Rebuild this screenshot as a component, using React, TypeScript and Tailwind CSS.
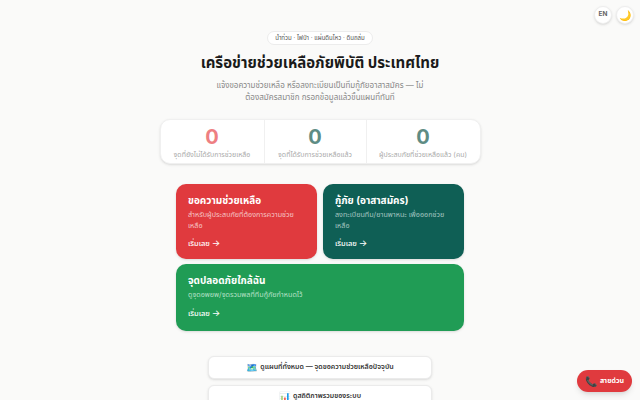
const font = { fontFamily: '"Inter", "Noto Sans Thai", "Noto Sans", "Liberation Sans", sans-serif' };

const stats = [
  { value: "0", label: "จุดที่ยังไม่ได้รับการช่วยเหลือ", color: "text-[#ee7f82]", width: "w-[104px]" },
  { value: "0", label: "จุดที่ได้รับการช่วยเหลือแล้ว", color: "text-[#5e8c84]", width: "w-[102px]" },
  { value: "0", label: "ผู้ประสบภัยที่ช่วยเหลือแล้ว (คน)", color: "text-[#5e8c84]", width: "flex-1" },
];

const Card = ({ title, desc, bg, sub, className }: { title: string; desc: string; bg: string; sub: string; className: string }) => (
  <div className={`${bg} ${className} rounded-[10px] px-3 pt-[6px] text-white shadow-sm`}>
    <h2 className="text-[10px] font-bold leading-[20px]">{title}</h2>
    <p className={`${sub} text-[7.2px] leading-[10.5px]`}>{desc}</p>
    <p className="mt-[7px] text-[7.5px] font-medium leading-[12px]">เริ่มเลย <span className="text-[9px] leading-none">→</span></p>
  </div>
);

const LinkButton = ({ icon, text }: { icon: string; text: string }) => (
  <button className="flex h-[23px] items-center justify-center gap-[2px] rounded-[6px] border border-[#ebebeb] bg-white text-[7px] font-semibold text-[#333333] shadow-sm">
    <span className="text-[9.5px] leading-none">{icon}</span>
    {text}
  </button>
);

export default function App() {
  return (
    <div style={font} className="relative h-[400px] w-[640px] overflow-hidden bg-[#fafaf9] text-[#1c1c1c]">
      <div className="absolute right-[6px] top-[6px] flex gap-1">
        <button className="flex h-[18px] w-[18px] items-center justify-center rounded-full border border-[#eeeeee] bg-white text-[6.5px] font-bold text-[#666666] shadow-sm">EN</button>
        <button className="flex h-[18px] w-[18px] items-center justify-center rounded-full border border-[#eeeeee] bg-white text-[10px] shadow-sm">🌙</button>
      </div>

      <div className="flex flex-col items-center pt-[31px]">
        <div className="rounded-full border border-[#ececec] bg-white px-[7px] text-[6.1px] leading-[12px] text-[#555555]">น้ำท่วม · ไฟป่า · แผ่นดินไหว · ดินถล่ม</div>
        <h1 className="mt-[6px] text-[15px] font-bold leading-[24px] text-[#1a1a1a]">เครือข่ายช่วยเหลือภัยพิบัติ ประเทศไทย</h1>
        <p className="mt-[4px] text-center text-[8px] leading-[12px] text-[#888888]">แจ้งขอความช่วยเหลือ หรือลงทะเบียนเป็นทีมกู้ภัยอาสาสมัคร — ไม่<br />ต้องสมัครสมาชิก กรอกข้อมูลแล้วขึ้นแผนที่ทันที</p>

        <div className="mt-[16px] flex h-[45px] w-[321px] rounded-[10px] border border-[#f0f0f0] bg-white shadow-sm">
          {stats.map((s, i) => (
            <div key={i} className={`${s.width} flex flex-col items-center border-[#f0f0f0] pt-[5px] [&:not(:last-child)]:border-r`}>
              <div className={`${s.color} text-[20px] font-bold leading-[24px]`}>{s.value}</div>
              <div className="text-[7px] leading-[11px] text-[#aaaaaa]">{s.label}</div>
            </div>
          ))}
        </div>

        <div className="mt-[20px] grid w-[288px] grid-cols-2 gap-x-1.5 gap-y-[5px]">
          <Card className="h-[75px]" bg="bg-[#e03a3e]" sub="text-[#f6c4c5]" title="ขอความช่วยเหลือ" desc="สำหรับผู้ประสบภัยที่ต้องการความช่วยเหลือ" />
          <Card className="h-[75px]" bg="bg-[#0f5f55]" sub="text-[#a4c5c0]" title="กู้ภัย (อาสาสมัคร)" desc="ลงทะเบียนทีม/ยานพาหนะ เพื่อออกช่วยเหลือ" />
          <Card className="col-span-2 h-[67px]" bg="bg-[#209c55]" sub="text-[#b5e0c6]" title="จุดปลอดภัยใกล้ฉัน" desc="ดูจุดอพยพ/จุดรวมพลที่ทีมกู้ภัยกำหนดไว้" />
        </div>

        <div className="mt-[25px] flex w-[224px] flex-col gap-[6px]">
          <LinkButton icon="🗺️" text="ดูแผนที่ทั้งหมด — จุดขอความช่วยเหลือปัจจุบัน" />
          <LinkButton icon="📊" text="ดูสถิติภาพรวมของระบบ" />
        </div>
      </div>

      <button className="absolute bottom-[8px] right-[8px] flex h-[22px] w-[55px] items-center justify-center gap-[3px] rounded-full bg-[#e03a3e] text-[7px] font-bold text-white shadow-md"><span className="text-[10px] leading-none">📞</span>สายด่วน</button>
    </div>
  );
}
